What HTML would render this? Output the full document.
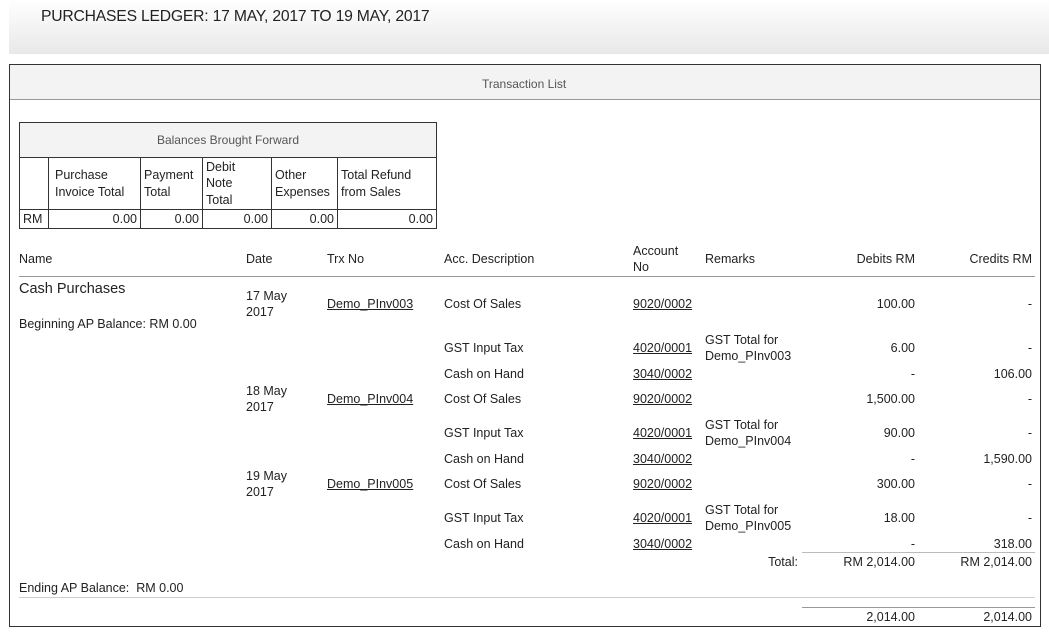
<!DOCTYPE html>
<html><head><meta charset="utf-8"><style>
*{margin:0;padding:0;box-sizing:border-box}
body{width:1049px;height:632px;background:#fff;font-family:"Liberation Sans",sans-serif;font-size:12.5px;color:#222;position:relative;overflow:hidden}
.a{position:absolute;white-space:nowrap;line-height:16px;margin-top:1px}
.r{text-align:right}
u{text-decoration:underline}
.hl{position:absolute;height:1px;background:#bbb}
.bt td{border:1px solid #333;vertical-align:middle;padding:0 3px;font-size:12.5px;line-height:16.5px}
</style></head><body>
<div style="position:absolute;left:9px;top:0;width:1040px;height:54px;background:linear-gradient(#fff,#e8e8e8)"></div>
<div class="a" style="left:41px;top:6px;font-size:15.7px;line-height:20px;color:#222;letter-spacing:-0.2px">PURCHASES LEDGER: 17 MAY, 2017 TO 19 MAY, 2017</div>
<div style="position:absolute;left:9px;top:64px;width:1032px;height:563px;border:1px solid #333"></div>
<div style="position:absolute;left:10px;top:65px;width:1030px;height:35px;background:#f3f3f3;border-bottom:1px solid #999"></div>
<div class="a" style="left:482px;top:75px;font-size:12px;color:#555">Transaction List</div>

<table class="bt" style="position:absolute;left:19px;top:122px;width:418px;height:107px;border-collapse:collapse">
<tr style="height:35px;background:#f3f3f3"><td colspan="6" style="text-align:center;color:#555;font-size:12px">Balances Brought Forward</td></tr>
<tr style="height:52px"><td style="width:29px"></td><td style="width:92px;padding-left:6px">Purchase<br>Invoice Total</td><td style="width:62px">Payment<br>Total</td><td style="width:69px">Debit<br>Note<br>Total</td><td style="width:66px">Other<br>Expenses</td><td>Total Refund<br>from Sales</td></tr>
<tr style="height:19px"><td>RM</td><td class="r">0.00</td><td class="r">0.00</td><td class="r">0.00</td><td class="r">0.00</td><td class="r">0.00</td></tr>
</table>

<div class="a" style="left:19px;top:250px">Name</div>
<div class="a" style="left:246px;top:250px">Date</div>
<div class="a" style="left:327px;top:250px">Trx No</div>
<div class="a" style="left:444px;top:250px">Acc. Description</div>
<div class="a" style="left:633px;top:242px">Account<br>No</div>
<div class="a" style="left:705px;top:250px">Remarks</div>
<div class="a r" style="left:815px;width:100px;top:250px">Debits RM</div>
<div class="a r" style="left:932px;width:100px;top:250px">Credits RM</div>
<div class="hl" style="left:19px;top:276px;width:1016px;background:#999"></div>

<div class="a" style="left:19px;top:279px;font-size:14.5px;line-height:18px">Cash Purchases</div>
<div class="a" style="left:19px;top:315px">Beginning AP Balance: RM 0.00</div>

<div class="a" style="left:246px;top:287px">17 May<br>2017</div>
<div class="a" style="left:327px;top:295px"><u>Demo_PInv003</u></div>
<div class="a" style="left:444px;top:295px">Cost Of Sales</div>
<div class="a" style="left:633px;top:295px"><u>9020/0002</u></div>
<div class="a r" style="left:815px;width:100px;top:295px">100.00</div>
<div class="a r" style="left:932px;width:100px;top:295px">-</div>

<div class="a" style="left:444px;top:339px">GST Input Tax</div>
<div class="a" style="left:633px;top:339px"><u>4020/0001</u></div>
<div class="a" style="left:705px;top:331px">GST Total for<br>Demo_PInv003</div>
<div class="a r" style="left:815px;width:100px;top:339px">6.00</div>
<div class="a r" style="left:932px;width:100px;top:339px">-</div>

<div class="a" style="left:444px;top:365px">Cash on Hand</div>
<div class="a" style="left:633px;top:365px"><u>3040/0002</u></div>
<div class="a r" style="left:815px;width:100px;top:365px">-</div>
<div class="a r" style="left:932px;width:100px;top:365px">106.00</div>

<div class="a" style="left:246px;top:382px">18 May<br>2017</div>
<div class="a" style="left:327px;top:390px"><u>Demo_PInv004</u></div>
<div class="a" style="left:444px;top:390px">Cost Of Sales</div>
<div class="a" style="left:633px;top:390px"><u>9020/0002</u></div>
<div class="a r" style="left:815px;width:100px;top:390px">1,500.00</div>
<div class="a r" style="left:932px;width:100px;top:390px">-</div>

<div class="a" style="left:444px;top:424px">GST Input Tax</div>
<div class="a" style="left:633px;top:424px"><u>4020/0001</u></div>
<div class="a" style="left:705px;top:416px">GST Total for<br>Demo_PInv004</div>
<div class="a r" style="left:815px;width:100px;top:424px">90.00</div>
<div class="a r" style="left:932px;width:100px;top:424px">-</div>

<div class="a" style="left:444px;top:450px">Cash on Hand</div>
<div class="a" style="left:633px;top:450px"><u>3040/0002</u></div>
<div class="a r" style="left:815px;width:100px;top:450px">-</div>
<div class="a r" style="left:932px;width:100px;top:450px">1,590.00</div>

<div class="a" style="left:246px;top:467px">19 May<br>2017</div>
<div class="a" style="left:327px;top:475px"><u>Demo_PInv005</u></div>
<div class="a" style="left:444px;top:475px">Cost Of Sales</div>
<div class="a" style="left:633px;top:475px"><u>9020/0002</u></div>
<div class="a r" style="left:815px;width:100px;top:475px">300.00</div>
<div class="a r" style="left:932px;width:100px;top:475px">-</div>

<div class="a" style="left:444px;top:509px">GST Input Tax</div>
<div class="a" style="left:633px;top:509px"><u>4020/0001</u></div>
<div class="a" style="left:705px;top:501px">GST Total for<br>Demo_PInv005</div>
<div class="a r" style="left:815px;width:100px;top:509px">18.00</div>
<div class="a r" style="left:932px;width:100px;top:509px">-</div>

<div class="a" style="left:444px;top:535px">Cash on Hand</div>
<div class="a" style="left:633px;top:535px"><u>3040/0002</u></div>
<div class="a r" style="left:815px;width:100px;top:535px">-</div>
<div class="a r" style="left:932px;width:100px;top:535px">318.00</div>

<div class="hl" style="left:802px;top:552px;width:233px"></div>
<div class="a r" style="left:698px;width:100px;top:553px">Total:</div>
<div class="a r" style="left:795px;width:120px;top:553px">RM 2,014.00</div>
<div class="a r" style="left:912px;width:120px;top:553px">RM 2,014.00</div>

<div class="a" style="left:19px;top:579px">Ending AP Balance:&nbsp; RM 0.00</div>
<div class="hl" style="left:19px;top:597px;width:1016px;background:#ccc"></div>
<div class="hl" style="left:802px;top:607px;width:233px;background:#999"></div>
<div class="a r" style="left:815px;width:100px;top:608px">2,014.00</div>
<div class="a r" style="left:932px;width:100px;top:608px">2,014.00</div>
</body></html>
